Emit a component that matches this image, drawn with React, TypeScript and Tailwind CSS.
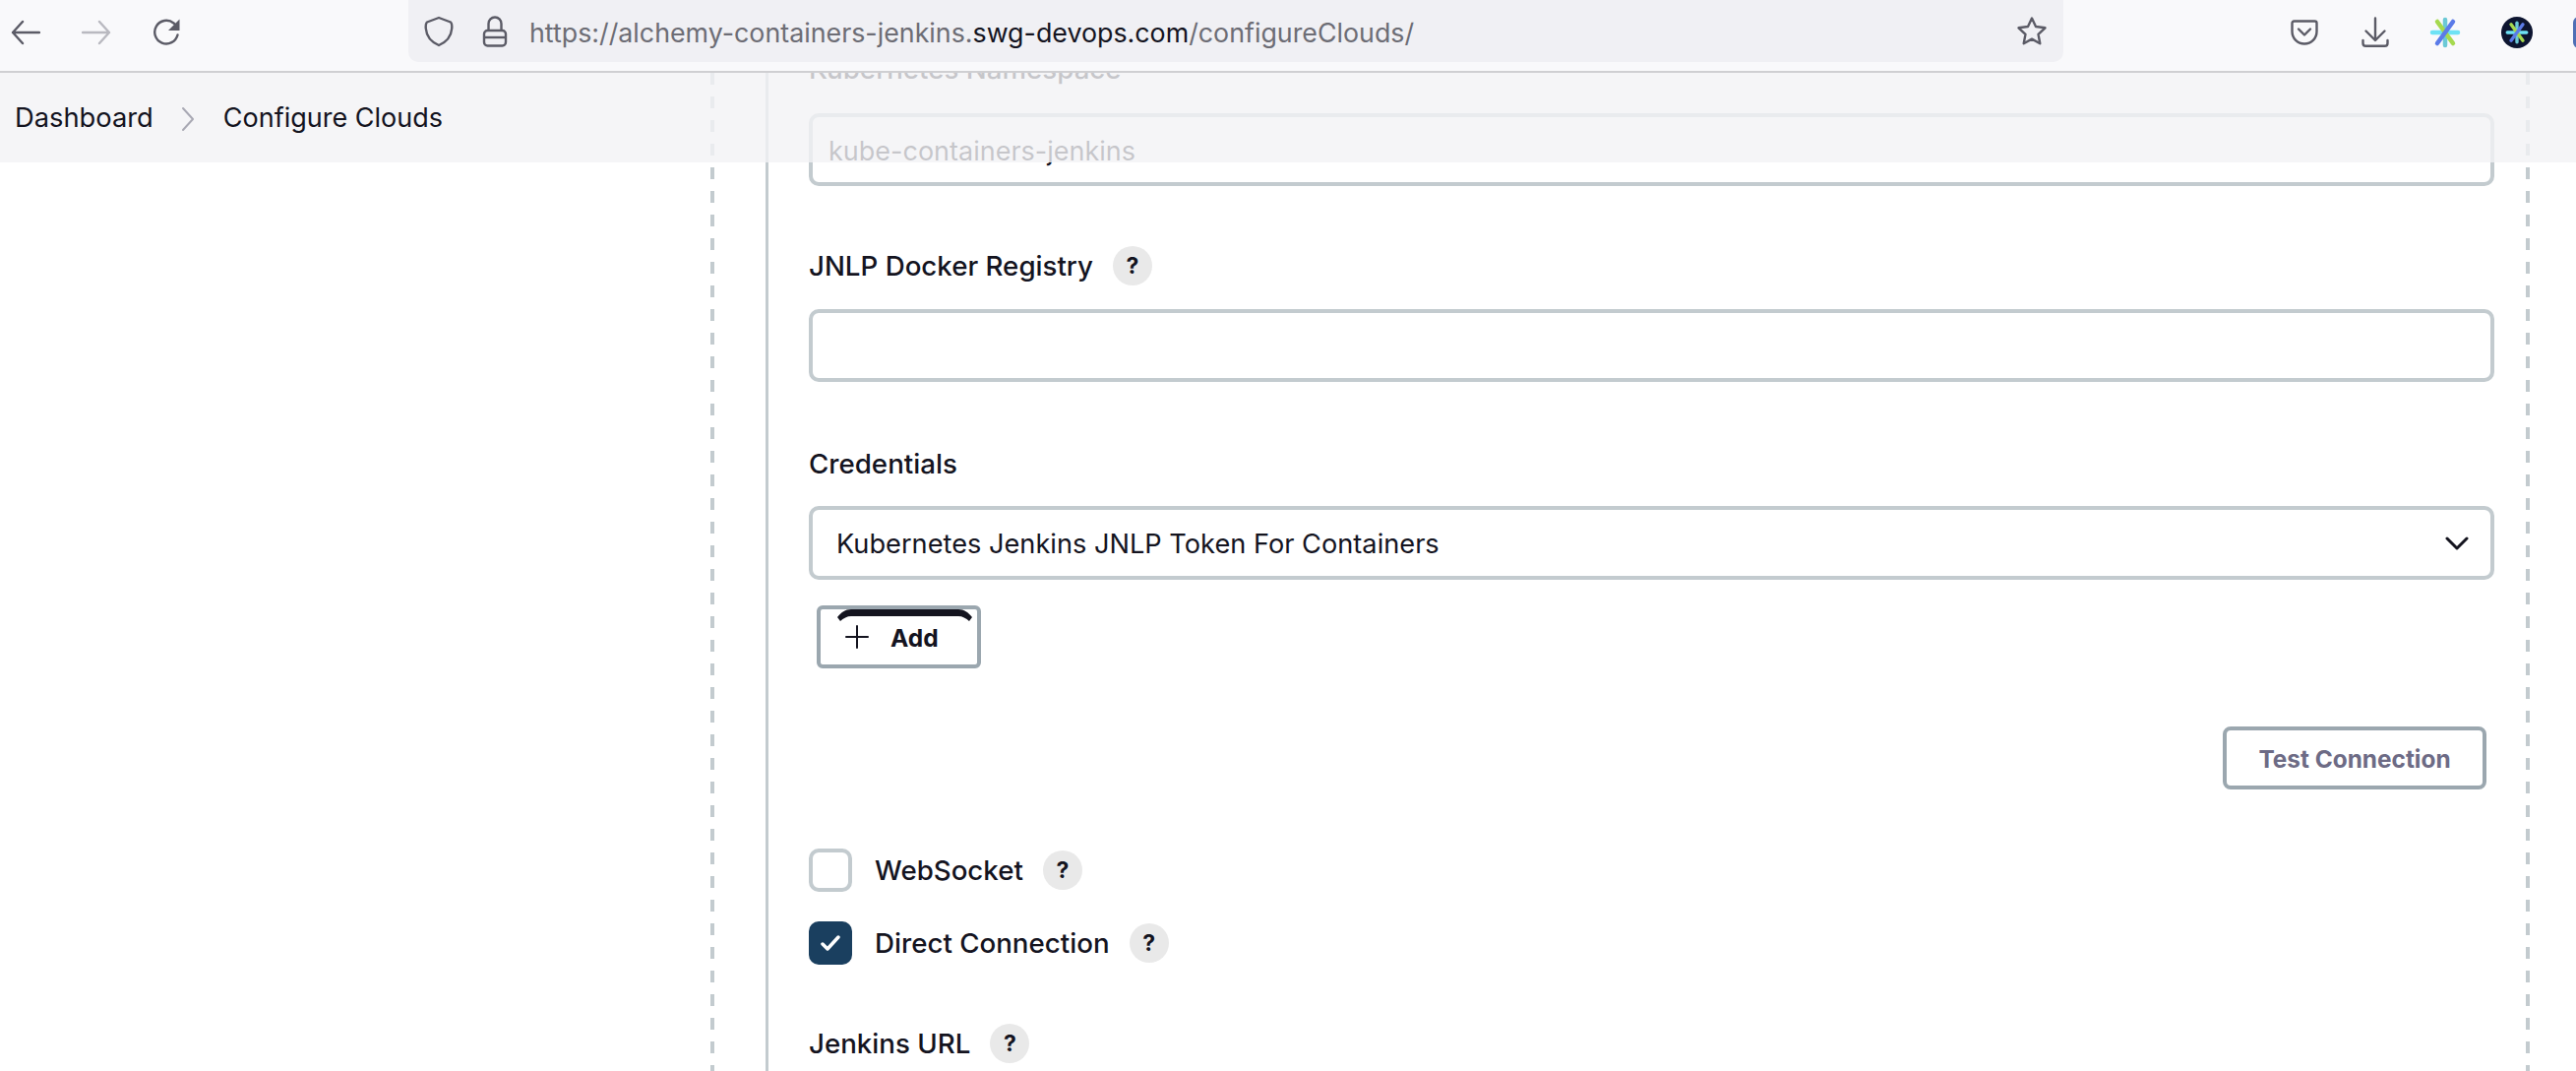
import type { ReactNode } from "react";

// ── Browser toolbar icons ────────────────────────────────────────────────────

function NavArrow({ flip, color }: { flip?: boolean; color: string }) {
  return (
    <svg width="30" height="26" viewBox="0 0 30 26" fill="none" stroke={color} strokeWidth="2.4" strokeLinecap="round" strokeLinejoin="round" className={flip ? "rotate-180" : ""}>
      <path d="M2 13h27M12 2 2 13l10 11" />
    </svg>
  );
}

function Reload() {
  return (
    <svg width="30" height="30" viewBox="0 0 30 30" fill="none">
      <path d="M25.500 17.500A11.800 11.800 0 1 1 21.500 5.500l4 4" stroke="#5b5b66" strokeWidth="2.400" strokeLinecap="round" />
      <path d="M27.500 1.500v11.500H16z" fill="#5b5b66" />
    </svg>
  );
}

function Shield() {
  return (
    <svg width="30" height="32" viewBox="0 0 30 32" fill="none" stroke="#5b5b66" strokeWidth="2.400" strokeLinejoin="round">
      <path d="M15 2 27 6.500c1 1 1.500 3 1.200 6.500C27.500 21 22 27 15 30 8 27 2.500 21 1.800 13c-.3-3.500.2-5.500 1.200-6.500z" />
    </svg>
  );
}

function Lock() {
  return (
    <svg width="26" height="32" viewBox="0 0 26 32" fill="none" stroke="#5b5b66" strokeWidth="2.400">
      <path d="M6.500 15V8a6.500 6.500 0 0 1 13 0v7" />
      <rect x="2" y="15" width="22" height="15.500" rx="3.500" />
      <path d="M2 22h22" />
    </svg>
  );
}

function Star() {
  return (
    <svg width="32" height="32" viewBox="0 0 32 32" fill="none" stroke="#5b5b66" strokeWidth="2.400" strokeLinejoin="round">
      <path d="M16 2.500l4 8.500 9.500 1.300-7 6.500 1.800 9.400L16 23.600l-8.300 4.600 1.800-9.400-7-6.500L12 11z" />
    </svg>
  );
}

function Pocket() {
  return (
    <svg width="28" height="26" viewBox="0 0 28 26" fill="none" stroke="#5b5b66" strokeWidth="2.400" strokeLinecap="round" strokeLinejoin="round">
      <path d="M3.500 1.500h21c1.200 0 2 .8 2 2V12c0 7-5.500 12.500-12.500 12.500S1.500 19 1.500 12V3.500c0-1.200.8-2 2-2z" />
      <path d="M8 9.500l6 6 6-6" />
    </svg>
  );
}

function Download() {
  return (
    <svg width="28" height="32" viewBox="0 0 28 32" fill="none" stroke="#5b5b66" strokeWidth="2.400" strokeLinecap="round" strokeLinejoin="round">
      <path d="M14 1.500v22M4.500 14.500l9.500 9.500 9.500-9.500" />
      <path d="M1.500 24v3c0 1.800 1 2.800 2.800 2.800h19.400c1.800 0 2.800-1 2.800-2.800v-3" />
    </svg>
  );
}

function Spark({ size }: { size: number }) {
  return (
    <svg width={size} height={size} viewBox="0 0 32 32" fill="none" strokeWidth="4.500" strokeLinecap="round">
      <path d="M3 16h26" stroke="#6ee2f5" />
      <path d="M16 3v26" stroke="#6cc9d6" />
      <path d="M8 5l16 22" stroke="#a6d94f" />
      <path d="M24 5 8 27" stroke="#5b7be8" />
    </svg>
  );
}

// ── Form pieces ──────────────────────────────────────────────────────────────

function Help() {
  return (
    <span className="flex h-10 w-10 shrink-0 items-center justify-center rounded-full bg-[#e9e9e9] text-[23px] font-bold text-[#14141f]">
      ?
    </span>
  );
}

function FieldLabel({ children, help, className }: { children: ReactNode; help?: boolean; className: string }) {
  return (
    <div className={`flex h-10 items-center gap-5 ${className}`}>
      <span className="pt-[2px] text-[27.700px] font-[450]">{children}</span>
      {help && <Help />}
    </div>
  );
}

function TextBox({ value }: { value: string }) {
  return (
    <input
      readOnly
      value={value}
      className="block h-[74px] w-full rounded-[10px] border-4 border-[#c3cbcf] bg-white px-4 pt-[2px] text-[27px] text-[#14141f] outline-none"
    />
  );
}

function Check({ checked, label }: { checked?: boolean; label: string }) {
  return (
    <div className="flex h-11 items-center">
      {checked ? (
        <span className="flex h-11 w-11 items-center justify-center rounded-[10px] bg-[#1a3f5f]">
          <svg width="20" height="16" viewBox="0 0 20 16" fill="none" stroke="#fff" strokeWidth="3.500" strokeLinecap="round" strokeLinejoin="round">
            <path d="M2 9l5 5L18 2" />
          </svg>
        </span>
      ) : (
        <span className="h-11 w-11 rounded-[10px] border-4 border-[#c3cbcf] bg-white" />
      )}
      <span className="ml-[23px] mr-5 pt-[2px] text-[27.700px] font-[450]">{label}</span>
      <Help />
    </div>
  );
}

const dashes = "h-full w-1 shrink-0 bg-[repeating-linear-gradient(to_bottom,#c3cbcf_0,#c3cbcf_12px,transparent_12px,transparent_24px)]";

export default function App() {
  return (
    <div className="flex h-[1088px] w-[2618px] flex-col overflow-hidden bg-white font-['Inter',sans-serif] text-[27px] text-[#14141f]">
      <header className="relative z-20 flex h-[74px] shrink-0 items-start border-b-2 border-[#cfcfd2] bg-[#f9f9fb]">
        <div className="flex h-[66px] w-[415px] shrink-0 items-center pl-[11px]">
          <NavArrow color="#5b5b66" />
          <span className="ml-[42px]"><NavArrow flip color="#b9b9c0" /></span>
          <span className="ml-[42px]"><Reload /></span>
        </div>
        <div className="flex h-[63px] w-[1682px] shrink-0 items-center rounded-b-[10px] bg-[#f0f0f4] pl-[16px] pr-[16px]">
          <Shield />
          <span className="ml-[29px]"><Lock /></span>
          <span className="ml-[22px] flex-1 whitespace-nowrap pt-[3px] text-[26.800px] text-[#6d6d75]">
            https://alchemy-containers-jenkins.<span className="text-[#14141f]">swg-devops.com</span>/configureClouds/
          </span>
          <Star />
        </div>
        <div className="flex h-[66px] flex-1 items-center pl-[231px]">
          <Pocket />
          <span className="ml-[44px]"><Download /></span>
          <span className="ml-[41px]"><Spark size={32} /></span>
          <span className="ml-[41px] flex h-8 w-8 items-center justify-center rounded-full bg-[#0d1530]"><Spark size={24} /></span>
          <span className="ml-[41px] h-8 w-2 rounded-l-md bg-[#4f6fb5]" />
        </div>
      </header>

      <main className="relative flex-1 overflow-hidden">
        <div className="ml-[722px] flex h-full w-[1849px] justify-between">
          <div className={dashes} />
          <div className="ml-[52px] h-full flex-1 border-l-[3px] border-[#c3cbcf] pl-[41px] pr-[32px]">
            <FieldLabel className="-mt-[24px] mb-[25px]">Kubernetes Namespace</FieldLabel>
            <TextBox value="kube-containers-jenkins" />

            <FieldLabel help className="mb-[24px] mt-[61px]">JNLP Docker Registry</FieldLabel>
            <TextBox value="" />

            <FieldLabel className="mb-[23px] mt-[63px]">Credentials</FieldLabel>
            <div className="flex h-[75px] items-center justify-between rounded-[10px] border-4 border-[#c3cbcf] pl-[24px] pr-[22px]">
              <span className="pt-[3px] text-[27.200px]">Kubernetes Jenkins JNLP Token For Containers</span>
              <svg width="24" height="14" viewBox="0 0 24 14" fill="none" stroke="#14141f" strokeWidth="3" strokeLinecap="round" strokeLinejoin="round">
                <path d="M2 2l10 10L22 2" />
              </svg>
            </div>

            <button className="relative ml-2 mt-[26px] flex h-16 w-[167px] items-center rounded-[6px] border-4 border-[#9ba7af] pl-[25px] text-[24.500px] font-bold">
              <svg className="absolute -top-0 left-[17px]" width="137" height="12" viewBox="0 0 137 12" fill="#14141f">
                <path d="M0 8C4 3 8 0 14 0h109c6 0 10 3 14 8l-3 4c-3-3-7-5-11-5H14C10 7 6 9 3 12z" />
              </svg>
              <svg width="24" height="24" viewBox="0 0 24 24" stroke="#14141f" strokeWidth="2" strokeLinecap="round">
                <path d="M12 1v22M1 12h22" />
              </svg>
              <span className="ml-[22px] pt-[2px]">Add</span>
            </button>

            <div className="mt-[59px] flex justify-end pr-2">
              <button className="h-16 w-[268px] rounded-[8px] border-4 border-[#9ba7af] pt-[2px] text-[24.400px] font-bold text-[#6d6b85]">
                Test Connection
              </button>
            </div>

            <div className="mt-[60px] flex flex-col gap-[30px]">
              <Check label="WebSocket" />
              <Check checked label="Direct Connection" />
            </div>

            <FieldLabel help className="mt-[60px]">Jenkins URL</FieldLabel>
          </div>
          <div className={dashes} />
        </div>

        {/* translucent sticky breadcrumb bar */}
        <div className="absolute inset-x-0 top-0 flex h-[91px] items-center bg-[#f2f2f5]/80 pl-[15px] pt-[2px]">
          <span className="text-[27.300px]">Dashboard</span>
          <svg className="ml-[28px] mr-[29px]" width="14" height="26" viewBox="0 0 14 26" fill="none" stroke="#a9a9b4" strokeWidth="2" strokeLinecap="round" strokeLinejoin="round">
            <path d="M2 2l10 11L2 24" />
          </svg>
          <span className="text-[27px]">Configure Clouds</span>
        </div>
      </main>
    </div>
  );
}
